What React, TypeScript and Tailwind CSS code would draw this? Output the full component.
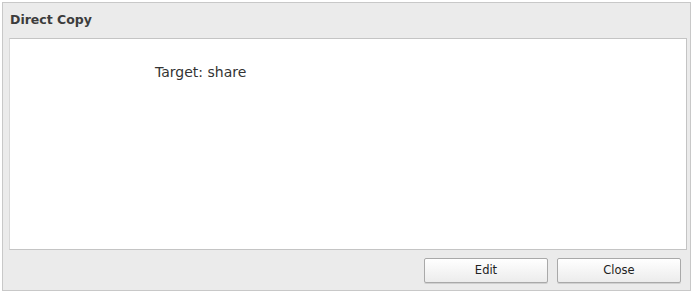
import React from 'react';

const App = () => {
  return (
    <div className="w-[693px] h-[292px] bg-white pl-[2px] pt-[2px] pr-[2px] pb-[1px]" style={{ fontFamily: '"DejaVu Sans", Tahoma, sans-serif' }}>
      <div className="flex h-full flex-col border border-[#c8c8c8] bg-[#ebebeb]">
        {/* en-tête */}
        <div className="flex h-[35px] items-center px-[7px] text-[12.5px] font-bold text-[#3c3c3c]">Direct Copy</div>
        <div className="flex flex-1 flex-col pl-[6px] pr-[3px]">
          <div className="h-[212px] border-l border-t border-b border-r border-[#c4c4c4] border-l-[#d8d8d8] bg-white pl-[145px] pt-[24px] text-[14px] leading-[18px] text-[#333]">
            Target: share
          </div>
          <div className="flex justify-end gap-[9px] pr-[6px] pt-[8px]">
            <button className="h-[25px] w-[124px] rounded-[2px] border border-[#a9a9a9] bg-gradient-to-b from-white to-[#ececec] text-[11.5px] text-[#222] shadow-[0_1px_0_#d0d0d0]">
              Edit
            </button>
            <button className="h-[25px] w-[124px] rounded-[2px] border border-[#a9a9a9] bg-gradient-to-b from-white to-[#ececec] text-[11.5px] text-[#222] shadow-[0_1px_0_#d0d0d0]">
              Close
            </button>
          </div>
        </div>
      </div>
    </div>
  );
};

export default App;
